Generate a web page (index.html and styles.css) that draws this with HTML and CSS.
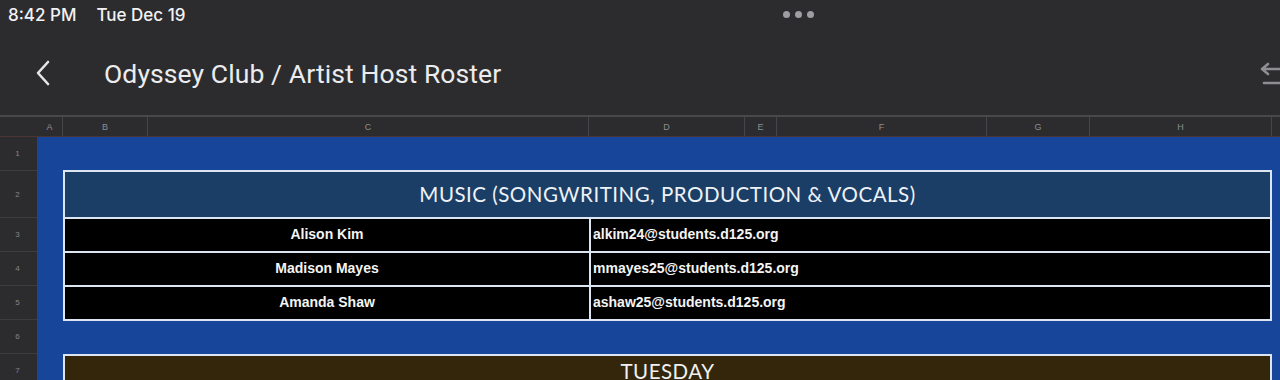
FILE: index.html
```html
<!DOCTYPE html>
<html lang="en">

<head>
    <meta charset="UTF-8">
    <meta name="viewport" content="width=device-width, initial-scale=1.0">
    <title>Odyssey Club / Artist Host Roster</title>
    <link rel="stylesheet" href="styles.css">
</head>

<body>
    <div class="status">
        <span class="clock">8:42 PM</span>
        <span class="date">Tue Dec 19</span>
        <span class="dots"><i></i><i></i><i></i></span>
    </div>

    <div class="navbar">
        <svg class="back" width="18" height="28" viewBox="0 0 18 28">
            <path d="M14 3 L4 14 L14 25" fill="none" stroke="#e6e6e8" stroke-width="2.6" stroke-linecap="round" stroke-linejoin="round"/>
        </svg>
        <h1 class="title">Odyssey Club / Artist Host Roster</h1>
        <svg class="undo" width="20" height="34" viewBox="0 0 20 34">
            <path d="M8 10 L2 15 L8 20 M2 15 H22 M4 29 H22" fill="none" stroke="#8e8e93" stroke-width="2.6" stroke-linecap="round" stroke-linejoin="round"/>
        </svg>
    </div>

    <div class="colheads">
        <div class="corner"></div>
        <div class="col" style="width:26px">A</div>
        <div class="col" style="width:85px">B</div>
        <div class="col" style="width:441px">C</div>
        <div class="col" style="width:156px">D</div>
        <div class="col" style="width:32px">E</div>
        <div class="col" style="width:210px">F</div>
        <div class="col" style="width:103px">G</div>
        <div class="col" style="width:182px">H</div>
        <div class="col last"></div>
    </div>

    <div class="sheet">
        <div class="rowheads">
            <div class="rowhead">1</div>
            <div class="rowhead tall">2</div>
            <div class="rowhead">3</div>
            <div class="rowhead">4</div>
            <div class="rowhead">5</div>
            <div class="rowhead">6</div>
            <div class="rowhead">7</div>
        </div>

        <div class="canvas">
            <table class="roster">
                <colgroup>
                    <col class="name-col">
                    <col>
                </colgroup>
                <tr>
                    <th colspan="2" class="music">MUSIC (SONGWRITING, PRODUCTION &amp; VOCALS)</th>
                </tr>
                <tr>
                    <td class="name">Alison Kim</td>
                    <td class="email">alkim24@students.d125.org</td>
                </tr>
                <tr>
                    <td class="name">Madison Mayes</td>
                    <td class="email">mmayes25@students.d125.org</td>
                </tr>
                <tr>
                    <td class="name">Amanda Shaw</td>
                    <td class="email">ashaw25@students.d125.org</td>
                </tr>
            </table>

            <table class="roster day">
                <tr>
                    <th class="tuesday">TUESDAY</th>
                </tr>
            </table>
        </div>
    </div>
</body>

</html>
```

FILE: styles.css
```css
body {
    margin: 0;
    background: #2c2c2e;
    color: #fff;
    font-family: "Inter", "Liberation Sans", sans-serif;
    overflow: hidden;
    height: 380px;
}

.status {
    height: 30px;
    display: flex;
    align-items: center;
    padding-left: 8px;
    font-size: 17px;
    font-weight: 500;
    color: #f2f2f4;
    position: relative;
}

.status .date {
    margin-left: 20px;
}

.dots {
    position: absolute;
    left: 783px;
    top: 11px;
    display: flex;
    gap: 5px;
}

.dots i {
    width: 7px;
    height: 7px;
    border-radius: 50%;
    background: #9d9da2;
}

.navbar {
    height: 87px;
    display: flex;
    align-items: center;
    box-sizing: border-box;
    padding-bottom: 3px;
    border-bottom: 2px solid #48484b;
}

.back {
    margin-left: 34px;
    margin-top: 3px;
}

.title {
    margin: 4px 0 0 52px;
    font-family: "Roboto", "Liberation Sans", sans-serif;
    font-weight: 400;
    font-size: 26.5px;
    color: #ececee;
    letter-spacing: 0.1px;
}

.undo {
    margin-left: auto;
}

.colheads {
    display: flex;
    height: 19px;
    border-bottom: 1px solid #4a3535;
}

.corner {
    width: 37px;
}

.col {
    box-sizing: border-box;
    border-right: 1px solid #46464a;
    font-family: "Liberation Sans", sans-serif;
    font-size: 9px;
    color: #8c8c90;
    display: flex;
    justify-content: center;
    align-items: center;
}

.col.last {
    flex: 1;
    border-right: 0;
}

.sheet {
    display: flex;
}

.rowheads {
    width: 37px;
    flex-shrink: 0;
}

.rowhead {
    height: 34px;
    box-sizing: border-box;
    border-bottom: 1px solid #3d3d40;
    font-family: "Liberation Sans", sans-serif;
    font-size: 8px;
    color: #85858a;
    display: flex;
    justify-content: center;
    align-items: center;
    padding-right: 2px;
}

.rowhead.tall {
    height: 47px;
}

.canvas {
    flex: 1;
    background: #16459a;
    padding: 33px 8px 0 26px;
    height: 260px;
}

.roster {
    width: 1209px;
    border-collapse: collapse;
    table-layout: fixed;
}

.name-col {
    width: 526px;
}

.roster th,
.roster td {
    border: 2px solid #dce6f2;
    padding: 0;
}

.music {
    height: 43px;
    padding-bottom: 2px !important;
    background: #1b3e66;
    font-family: "Lato", "Liberation Sans", sans-serif;
    font-weight: 400;
    font-size: 20.5px;
    letter-spacing: 0.5px;
    color: #eef2f7;
}

.roster td {
    height: 30px;
    padding-bottom: 2px;
    background: #000;
    font-family: "Liberation Sans", sans-serif;
    font-weight: bold;
    font-size: 14px;
    color: #f4f4f4;
}

.name {
    text-align: center;
}

.roster td.email {
    padding-left: 2px;
}

.day {
    margin-top: 33px;
}

.tuesday {
    height: 45px;
    vertical-align: top;
    padding-top: 3px !important;
    background: #33260b;
    font-family: "Lato", "Liberation Sans", sans-serif;
    font-weight: 400;
    font-size: 20.5px;
    letter-spacing: 0.5px;
    color: #eef0f2;
}
```
